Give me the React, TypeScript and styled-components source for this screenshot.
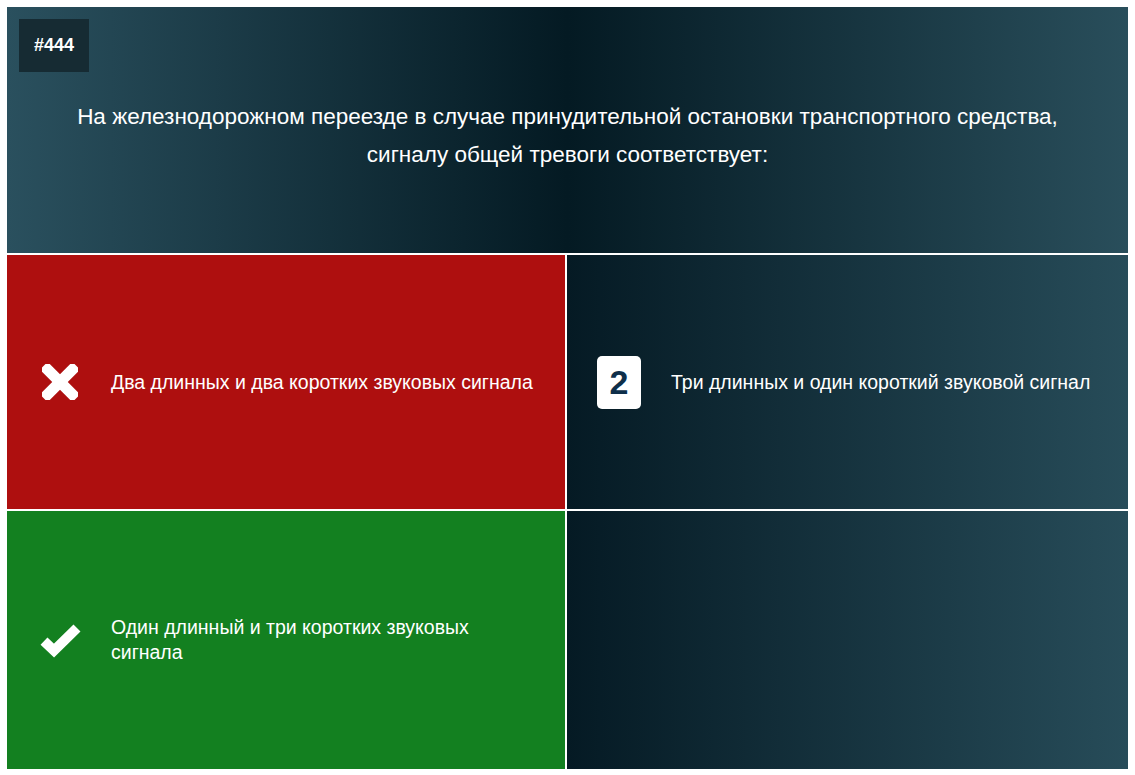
import React from "react";
import styled, { createGlobalStyle } from "styled-components";

const Global = createGlobalStyle`
  html, body { margin: 0; padding: 0; background: #ffffff; }
  body { padding: 7px; font-family: "Liberation Sans", Arial, sans-serif; }
`;

const Quiz = styled.div`
  width: 1121px;
  display: flex;
  flex-direction: column;
  gap: 2px;
`;

const Header = styled.div`
  height: 246px;
  box-sizing: border-box;
  padding: 12px;
  background: linear-gradient(to right, #2a505e 0%, #041a23 50%, #294e5b 100%);
  color: #fff;
  display: flex;
  flex-direction: column;
`;

const Badge = styled.div`
  width: 70px;
  height: 53px;
  background: #162b33;
  color: #fff;
  font-weight: 700;
  font-size: 18px;
  display: flex;
  align-items: center;
  justify-content: center;
  align-self: flex-start;
`;

const Question = styled.div`
  margin-top: 26px;
  font-size: 22.5px;
  line-height: 38px;
  text-align: center;
  padding: 0 20px;
`;

const Grid = styled.div`
  display: grid;
  grid-template-columns: 558px 561px;
  grid-template-rows: 254px 258px;
  gap: 2px;
`;

const Cell = styled.div<{ $kind: "wrong" | "right" | "neutral" }>`
  display: flex;
  align-items: center;
  color: #fff;
  background: ${(p) =>
    p.$kind === "wrong"
      ? "#ae0f0f"
      : p.$kind === "right"
      ? "#138020"
      : "linear-gradient(to right, #051a24 0%, #274c59 100%)"};
`;

const IconSlot = styled.div`
  width: 104px;
  flex: 0 0 104px;
  display: flex;
  align-items: center;
  justify-content: center;
`;

const NumBox = styled.div`
  width: 44px;
  height: 53px;
  border-radius: 5px;
  background: #fff;
  color: #0e2f4a;
  font-weight: 700;
  font-size: 34px;
  display: flex;
  align-items: center;
  justify-content: center;
`;

const AnswerText = styled.div`
  font-size: 19.5px;
  line-height: 25px;
  padding-right: 28px;
`;

const CrossIcon = () => (
  <svg width="36" height="36" viewBox="0 0 36 36" style={{ marginLeft: 2 }}>
    <g transform="translate(18 18)">
      <rect x="-23" y="-5.5" width="46" height="11" rx="1" fill="#fff" transform="rotate(45)" />
      <rect x="-23" y="-5.5" width="46" height="11" rx="1" fill="#fff" transform="rotate(-45)" />
    </g>
  </svg>
);

const CheckIcon = () => (
  <svg width="44" height="36" viewBox="0 0 44 36" style={{ marginLeft: 3 }}>
    <polyline
      points="5,19 15,28.5 38,6"
      fill="none"
      stroke="#fff"
      strokeWidth="10"
      strokeLinejoin="miter"
      strokeLinecap="butt"
    />
  </svg>
);

export default function App() {
  return (
    <>
      <Global />
      <Quiz>
        <Header>
          <Badge>#444</Badge>
          <Question>
            На железнодорожном переезде в случае принудительной остановки транспортного средства,
            <br />
            сигналу общей тревоги соответствует:
          </Question>
        </Header>
        <Grid>
          <Cell $kind="wrong">
            <IconSlot>
              <CrossIcon />
            </IconSlot>
            <AnswerText>Два длинных и два коротких звуковых сигнала</AnswerText>
          </Cell>
          <Cell $kind="neutral">
            <IconSlot>
              <NumBox>2</NumBox>
            </IconSlot>
            <AnswerText>Три длинных и один короткий звуковой сигнал</AnswerText>
          </Cell>
          <Cell $kind="right">
            <IconSlot>
              <CheckIcon />
            </IconSlot>
            <AnswerText>Один длинный и три коротких звуковых сигнала</AnswerText>
          </Cell>
          <Cell $kind="neutral" />
        </Grid>
      </Quiz>
    </>
  );
}
